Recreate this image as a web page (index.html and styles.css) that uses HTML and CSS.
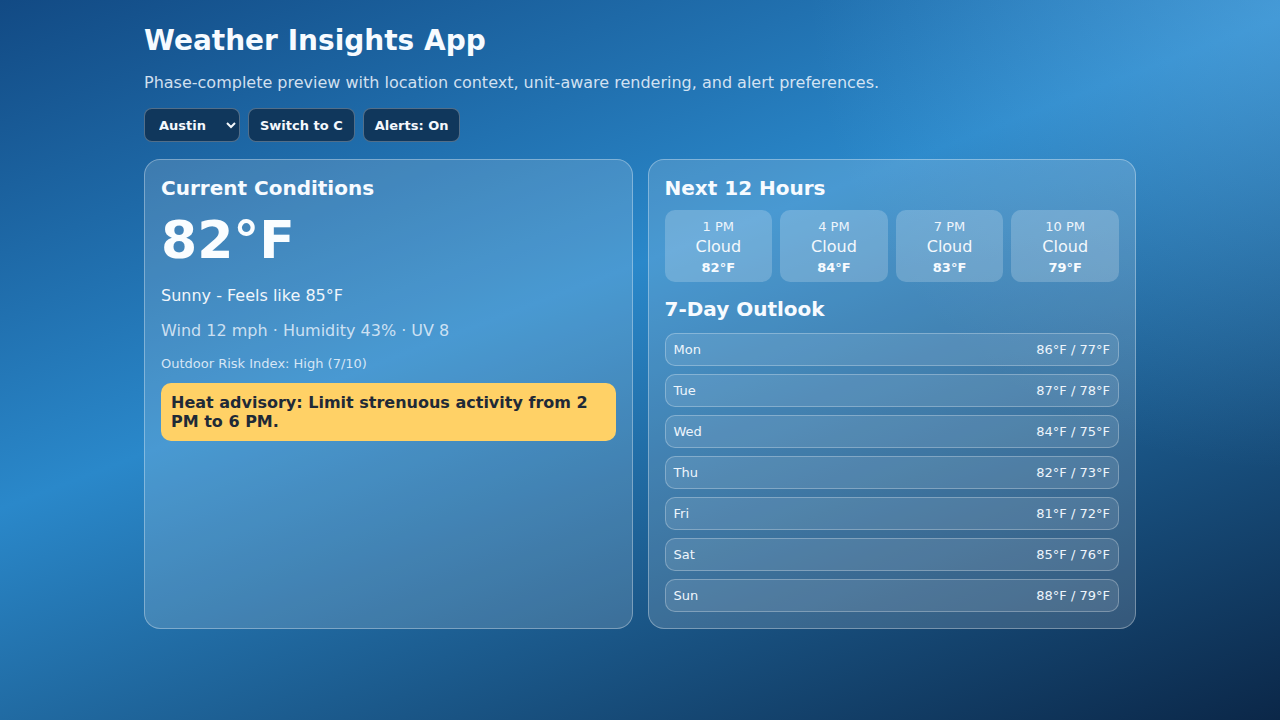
FILE: index.html
```html
<!DOCTYPE html>
<html lang="en">
<head>
<meta charset="utf-8">
<title>Weather Insights App</title>
<link rel="stylesheet" href="styles.css">
</head>
<body>
<main class="page">
  <h1 class="title">Weather Insights App</h1>
  <p class="subtitle">Phase-complete preview with location context, unit-aware rendering, and alert preferences.</p>
  <div class="controls">
    <select class="ctrl select">
      <option>Austin</option>
      <option>Denver</option>
      <option>Seattle</option>
    </select>
    <button class="ctrl">Switch to C</button>
    <button class="ctrl">Alerts: On</button>
  </div>
  <div class="grid">
    <section class="card">
      <h2 class="card-title">Current Conditions</h2>
      <div class="temp">82°F</div>
      <p class="summary">Sunny - Feels like 85°F</p>
      <p class="meta">Wind 12 mph · Humidity 43% · UV 8</p>
      <p class="risk">Outdoor Risk Index: High (7/10)</p>
      <div class="advisory">Heat advisory: Limit strenuous activity from 2 PM to 6 PM.</div>
    </section>
    <section class="card">
      <h2 class="card-title">Next 12 Hours</h2>
      <div class="hours">
        <div class="hour"><div class="h-time">1 PM</div><div class="h-cond">Cloud</div><div class="h-temp">82°F</div></div>
        <div class="hour"><div class="h-time">4 PM</div><div class="h-cond">Cloud</div><div class="h-temp">84°F</div></div>
        <div class="hour"><div class="h-time">7 PM</div><div class="h-cond">Cloud</div><div class="h-temp">83°F</div></div>
        <div class="hour"><div class="h-time">10 PM</div><div class="h-cond">Cloud</div><div class="h-temp">79°F</div></div>
      </div>
      <h2 class="card-title outlook">7-Day Outlook</h2>
      <ul class="days">
        <li class="day"><span>Mon</span><span>86°F / 77°F</span></li>
        <li class="day"><span>Tue</span><span>87°F / 78°F</span></li>
        <li class="day"><span>Wed</span><span>84°F / 75°F</span></li>
        <li class="day"><span>Thu</span><span>82°F / 73°F</span></li>
        <li class="day"><span>Fri</span><span>81°F / 72°F</span></li>
        <li class="day"><span>Sat</span><span>85°F / 76°F</span></li>
        <li class="day"><span>Sun</span><span>88°F / 79°F</span></li>
      </ul>
    </section>
  </div>
</main>
</body>
</html>
```
FILE: styles.css
```css
* { box-sizing: border-box; }
html, body { margin: 0; height: 100%; }
body {
  font-family: "DejaVu Sans", sans-serif;
  color: #f4f8fc;
  min-height: 720px;
  background:
    radial-gradient(circle at 100% 0%, rgba(120, 190, 240, 0.35), rgba(120, 190, 240, 0) 32%),
    linear-gradient(159deg, #124a84 0%, #2a88ca 42%, #0b2748 100%);
}
.page {
  width: 992px;
  margin: 0 auto;
  padding-top: 24px;
}
.title {
  margin: 0;
  font-size: 28px;
  line-height: 33px;
  font-weight: 700;
  color: #f7fbff;
}
.subtitle {
  margin: 16px 0 0;
  font-size: 16px;
  line-height: 19px;
  color: rgba(235, 243, 252, 0.88);
}
.controls {
  display: flex;
  gap: 8px;
  margin-top: 16px;
}
.ctrl {
  height: 34px;
  padding: 0 11px;
  border: 1px solid rgba(255, 255, 255, 0.28);
  border-radius: 8px;
  background: #10375c;
  color: #f4f8fc;
  font-family: "DejaVu Sans", sans-serif;
  font-size: 13px;
  font-weight: 700;
}
.select {
  width: 96px;
  padding-left: 10px;
  padding-right: 2px;
}
.grid {
  display: grid;
  grid-template-columns: 1fr 1fr;
  gap: 15px;
  margin-top: 17px;
}
.card {
  border: 1px solid rgba(255, 255, 255, 0.32);
  border-radius: 16px;
  background: rgba(255, 255, 255, 0.15);
  padding: 16px;
}
.card-title {
  margin: 0;
  font-size: 20px;
  line-height: 24px;
  font-weight: 700;
  color: #f7fbff;
}
.temp {
  margin-top: 10px;
  font-size: 52px;
  line-height: 60px;
  font-weight: 700;
  color: #fafdff;
}
.summary {
  margin: 16px 0 0;
  font-size: 16px;
  line-height: 20px;
  color: #f1f6fb;
}
.meta {
  margin: 15px 0 0;
  font-size: 16px;
  line-height: 20px;
  color: rgba(235, 243, 252, 0.82);
}
.risk {
  margin: 15px 0 0;
  font-size: 13px;
  line-height: 16px;
  color: rgba(235, 243, 252, 0.88);
}
.advisory {
  margin-top: 11px;
  padding: 10px;
  border-radius: 10px;
  background: #ffd166;
  color: #1f2a37;
  font-size: 16px;
  line-height: 19px;
  font-weight: 700;
}
.hours {
  display: grid;
  grid-template-columns: repeat(4, 1fr);
  gap: 8px;
  margin-top: 10px;
}
.hour {
  height: 72px;
  padding-top: 9px;
  border-radius: 10px;
  background: rgba(255, 255, 255, 0.2);
  text-align: center;
}
.h-time {
  font-size: 13px;
  line-height: 16px;
  color: #eef5fc;
}
.h-cond {
  margin-top: 1px;
  font-size: 16px;
  line-height: 22px;
  color: #f4f8fc;
}
.h-temp {
  margin-top: 1px;
  font-size: 13px;
  line-height: 18px;
  font-weight: 700;
  color: #f7fbff;
}
.outlook {
  margin-top: 15px;
}
.days {
  list-style: none;
  margin: 12px 0 0;
  padding: 0;
  display: flex;
  flex-direction: column;
  gap: 8px;
}
.day {
  display: flex;
  justify-content: space-between;
  align-items: center;
  height: 33px;
  padding: 0 8px;
  border: 1px solid rgba(255, 255, 255, 0.28);
  border-radius: 10px;
  background: rgba(255, 255, 255, 0.1);
  font-size: 13px;
  line-height: 15px;
  color: #eef5fc;
}
```
